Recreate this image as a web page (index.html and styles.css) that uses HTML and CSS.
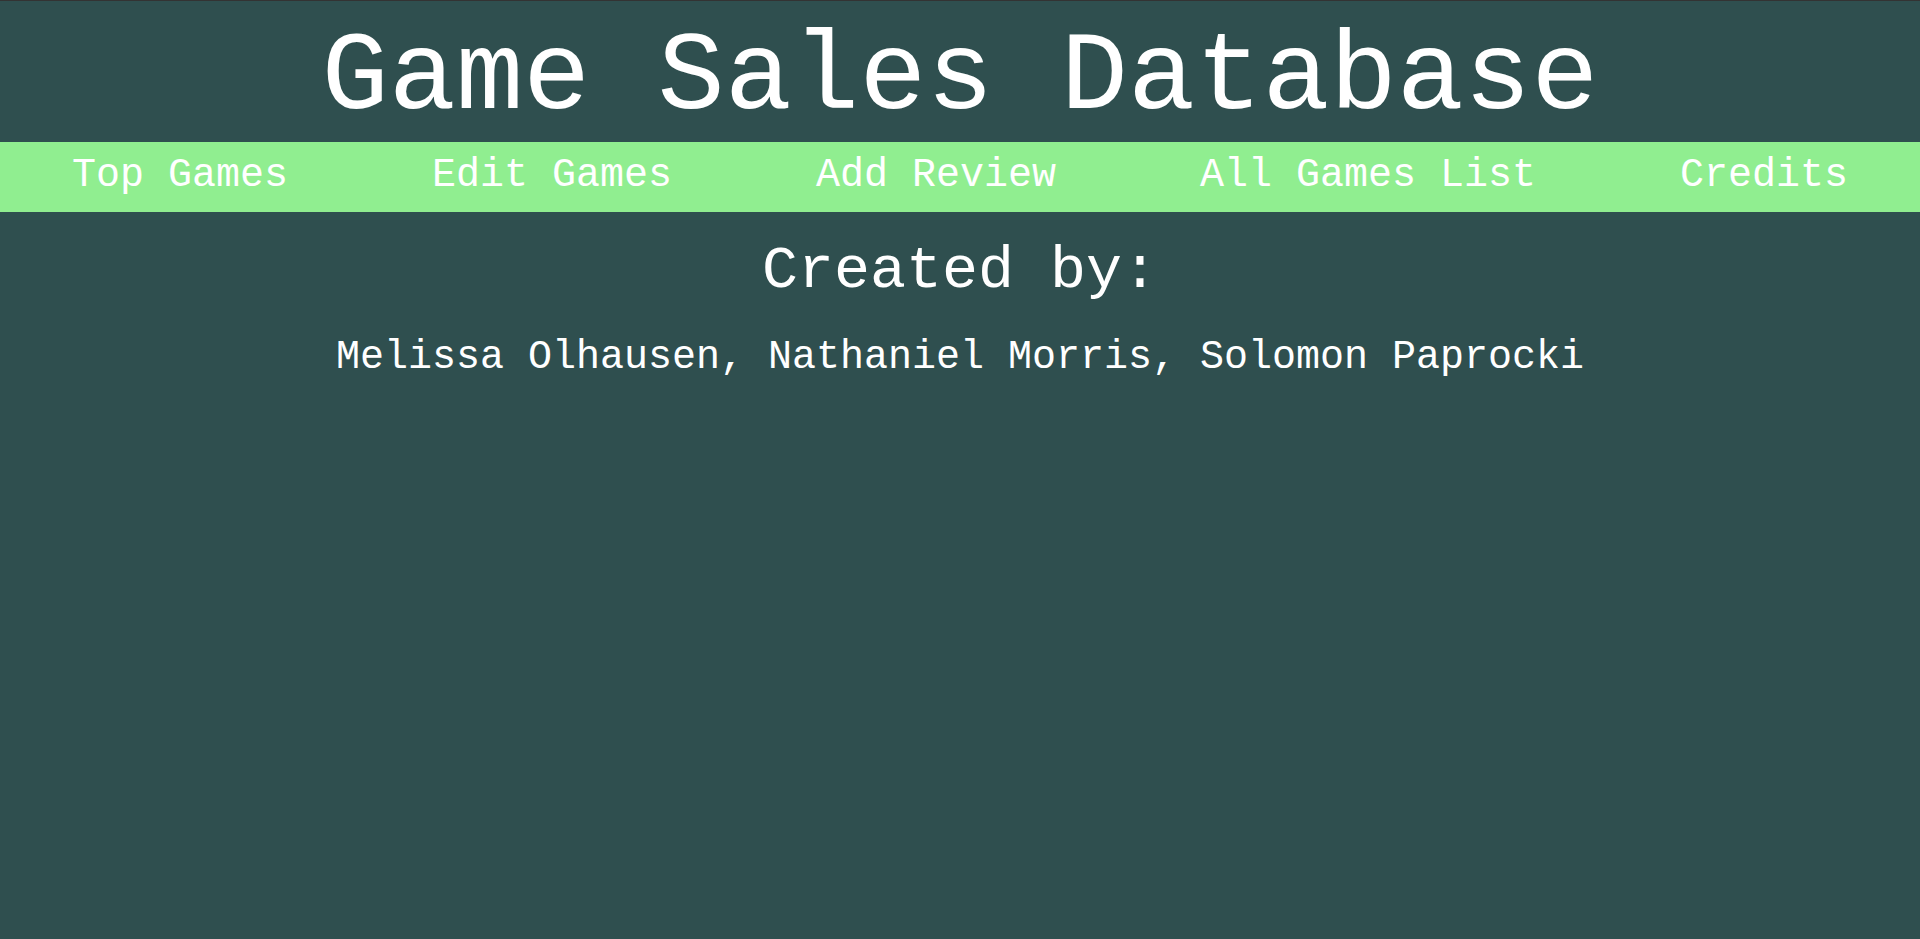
FILE: index.html
```html
<!DOCTYPE html>
<html lang="en">
<head>
<meta charset="utf-8">
<title>Game Sales Database - Credits</title>
<link rel="stylesheet" href="styles.css">
</head>
<body>
  <header class="site-header">
    <h1 class="site-title">Game Sales Database</h1>
  </header>
  <nav class="main-nav">
    <a class="nav-link" href="#">Top Games</a>
    <a class="nav-link" href="#">Edit Games</a>
    <a class="nav-link" href="#">Add Review</a>
    <a class="nav-link" href="#">All Games List</a>
    <a class="nav-link" href="#">Credits</a>
  </nav>
  <main class="credits">
    <h2 class="credits-heading">Created by:</h2>
    <p class="credits-names">Melissa Olhausen, Nathaniel Morris, Solomon Paprocki</p>
  </main>
</body>
</html>
```

FILE: styles.css
```css
html, body {
  margin: 0;
  padding: 0;
}

body {
  background: #2f4f4f;
  color: #ffffff;
  font-family: "Liberation Mono", "Courier New", monospace;
  min-height: 939px;
  box-sizing: border-box;
  border-top: 1px solid #333333;
}

.site-header {
  padding-top: 14px;
  text-align: center;
}

.site-title {
  margin: 0;
  font-size: 112px;
  font-weight: normal;
  line-height: normal;
}

.main-nav {
  display: flex;
  justify-content: space-around;
  align-items: center;
  background: #90ee90;
  height: 70px;
  box-sizing: border-box;
  padding-bottom: 3px;
}

.nav-link {
  color: #ffffff;
  text-decoration: none;
  font-size: 40px;
  line-height: normal;
}

.credits {
  text-align: center;
  padding-top: 25px;
}

.credits-heading {
  margin: 0;
  font-size: 60px;
  font-weight: normal;
  line-height: normal;
}

.credits-names {
  margin: 30px 0 0;
  font-size: 40px;
  line-height: normal;
}
```
